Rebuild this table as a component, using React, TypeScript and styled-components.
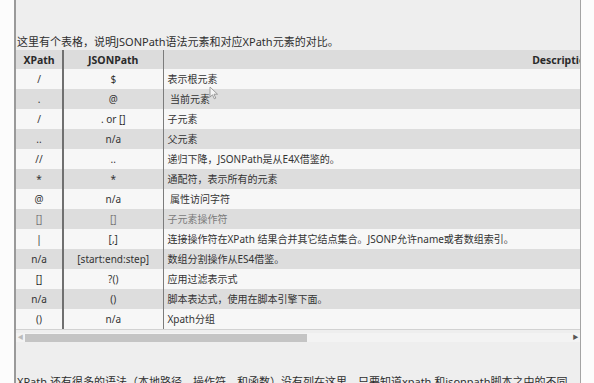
import React from "react";
import styled, { createGlobalStyle } from "styled-components";

const Global = createGlobalStyle`
  html, body { margin: 0; padding: 0; background: #fcfcfc; overflow: hidden; }
  body { font-family: "Noto Sans", "Noto Sans CJK SC", sans-serif; }
`;

const Stage = styled.div`
  position: relative;
  width: 594px;
  height: 383px;
  overflow: hidden;
  background: #fcfcfc;
`;

const Panel = styled.main`
  margin-left: 14px;
  width: 564px;
  height: 383px;
  box-sizing: content-box;
  border-left: 2px solid #9a9a9a;
  border-right: 1px solid #a4a4a4;
  background: #eeeeee;
  padding-top: 34px;
  overflow: hidden;
`;

const Para = styled.p`
  margin: 0;
  padding-left: 1px;
  font-family: "Noto Sans", "Noto Sans CJK SC", sans-serif;
  font-size: 11px;
  line-height: 16px;
  color: #2e2e2e;
  white-space: ${(p: { $wrap?: boolean }) => (p.$wrap ? "normal" : "nowrap")};
`;

const Footer = styled(Para)`
  margin-top: 32px;
  padding-right: 6px;
`;

const Viewport = styled.div`
  width: 564px;
  overflow: hidden;
  border-bottom: 1px solid #d2d2d2;
`;

const Table = styled.table`
  border-collapse: collapse;
  table-layout: fixed;
  width: 945px;
  font-family: "Noto Sans", "Noto Sans CJK SC", sans-serif;
  font-size: 10px;
  color: #333;
`;

const Head = styled.th<{ $sep?: "thick" | "thin" }>`
  height: 19px;
  padding: 0 4px;
  background: #dcdcdc;
  font-weight: 700;
  font-size: 10.5px;
  text-align: center;
  color: #2a2a2a;
  border-right: ${(p) =>
    p.$sep === "thick" ? "2px solid #707070" : p.$sep === "thin" ? "1px solid #7c7c7c" : "none"};
`;

const Row = styled.tr<{ $alt: boolean; $faded?: boolean }>`
  height: 20px;
  background: ${(p) => (p.$alt ? "#dddddd" : "#f7f7f7")};
  color: ${(p) => (p.$faded ? "#7a7a7a" : "#333")};
`;

const Cell = styled.td<{ $align?: "center" | "left"; $sep?: "thick" | "thin" }>`
  padding: 0 4px;
  line-height: 20px;
  white-space: nowrap;
  text-align: ${(p) => p.$align ?? "center"};
  border-right: ${(p) =>
    p.$sep === "thick" ? "2px solid #707070" : p.$sep === "thin" ? "1px solid #7c7c7c" : "none"};
`;

const Scrollbar = styled.div`
  display: flex;
  align-items: center;
  height: 9px;
  margin-top: 3px;
  background: #f3f3f3;
`;

const Arrow = styled.span<{ $dark?: boolean }>`
  width: 9px;
  display: flex;
  justify-content: center;
  align-items: center;
  font-size: 6px;
  line-height: 9px;
  color: ${(p) => (p.$dark ? "#555" : "#bbb")};
`;

const Track = styled.div`
  flex: 1;
  height: 9px;
  display: flex;
  align-items: center;
`;

const Thumb = styled.div`
  height: 8px;
  background: #c4c4c4;
`;

const Cursor = styled.svg`
  position: absolute;
  left: 209px;
  top: 86px;
  opacity: 0.7;
`;

type R = [string, string, string, boolean?];

const rows: R[] = [
  ["/", "$", "表示根元素"],
  [".", "@", "\u00a0当前元素"],
  ["/", ". or []", "子元素"],
  ["..", "n/a", "父元素"],
  ["//", "..", "递归下降，JSONPath是从E4X借鉴的。"],
  ["*", "*", "通配符，表示所有的元素"],
  ["@", "n/a", "\u00a0属性访问字符"],
  ["[]", "[]", "子元素操作符", true],
  ["|", "[,]", "连接操作符在XPath 结果合并其它结点集合。JSONP允许name或者数组索引。"],
  ["n/a", "[start:end:step]", "数组分割操作从ES4借鉴。"],
  ["[]", "?()", "应用过滤表示式"],
  ["n/a", "()", "脚本表达式，使用在脚本引擎下面。"],
  ["()", "n/a", "Xpath分组"],
];

export default function App() {
  return (
    <Stage>
      <Global />
      <Panel>
        <Para>这里有个表格，说明JSONPath语法元素和对应XPath元素的对比。</Para>
        <Viewport>
          <Table>
            <colgroup>
              <col style={{ width: 47 }} />
              <col style={{ width: 100 }} />
              <col style={{ width: 798 }} />
            </colgroup>
            <thead>
              <tr>
                <Head $sep="thick">XPath</Head>
                <Head $sep="thin">JSONPath</Head>
                <Head>Description</Head>
              </tr>
            </thead>
            <tbody>
              {rows.map(([x, j, d, faded], i) => (
                <Row key={i} $alt={i % 2 === 1} $faded={faded}>
                  <Cell $sep="thick">{x}</Cell>
                  <Cell $sep="thin">{j}</Cell>
                  <Cell $align="left">{d}</Cell>
                </Row>
              ))}
            </tbody>
          </Table>
        </Viewport>
        <Scrollbar>
          <Arrow>◀</Arrow>
          <Track>
            <Thumb style={{ width: 282 }} />
          </Track>
          <Arrow $dark>▶</Arrow>
        </Scrollbar>
        <Footer $wrap>
          XPath 还有很多的语法（本地路径，操作符，和函数）没有列在这里。只要知道xpath 和jsonpath脚本之中的不同点就行了。
        </Footer>
      </Panel>
      <Cursor width="10" height="14" viewBox="0 0 10 14">
        <path d="M1 1 L1 11 L3.5 8.8 L5.3 12.8 L6.8 12.1 L5 8.2 L8.5 8.2 Z" fill="#fff" stroke="#666" strokeWidth="0.8" />
      </Cursor>
    </Stage>
  );
}
